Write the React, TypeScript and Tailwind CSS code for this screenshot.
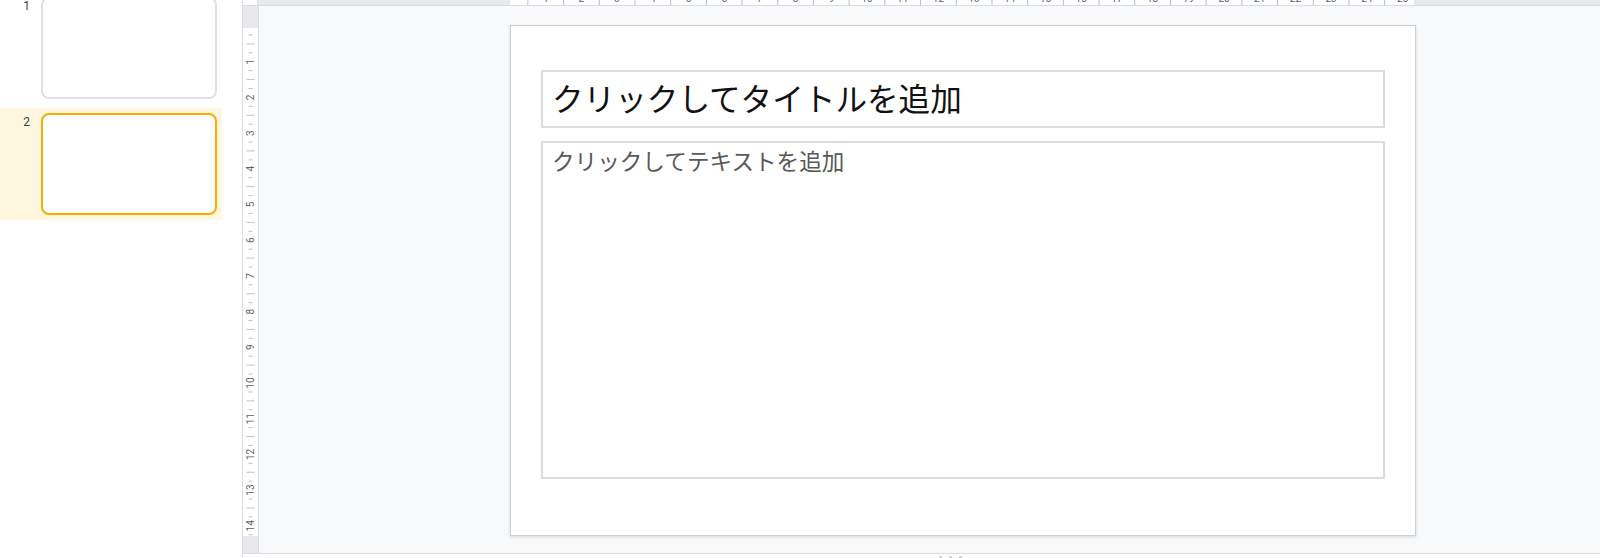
import React from "react";

const CM = 35.7;

function HRuler() {
  const w = 1342;
  const left = 252;
  const right = 1156;
  const ticks: number[] = [];
  for (let k = 0; k < 26; k++) ticks.push(left + CM / 2 + CM * k);
  const labels: number[] = [];
  for (let k = 1; k < 26; k++) labels.push(k);
  return (
    <svg width={w} height={5} className="block">
      <rect x={0} y={0} width={w} height={5} fill="#e8e9ec" />
      <rect x={left} y={0} width={right - left} height={5} fill="#ffffff" />
      {ticks.filter((t) => t < right).map((t, i) => (
        <line key={i} x1={t} x2={t} y1={0} y2={5} stroke="#b9bcc1" strokeWidth={1} />
      ))}
      {labels.map((k) => (
        <text
          key={k}
          x={left + CM * k}
          y={1.6}
          fontSize={10}
          fill="#5f6368"
          textAnchor="middle"
          fontFamily="Roboto, sans-serif"
        >
          {k}
        </text>
      ))}
    </svg>
  );
}

function VRuler() {
  const h = 547;
  const top = 20;
  const bottom = 530;
  const items: React.ReactNode[] = [];
  for (let k = 0; k < 15; k++) {
    const base = top + CM * k;
    const q1 = base + CM / 4;
    const q2 = base + CM / 2;
    const q3 = base + (CM * 3) / 4;
    if (q1 < bottom) items.push(<line key={`a${k}`} x1={5.5} x2={9.5} y1={q1} y2={q1} stroke="#bdc1c6" />);
    if (q2 < bottom) items.push(<line key={`b${k}`} x1={3.5} x2={11.5} y1={q2} y2={q2} stroke="#bdc1c6" />);
    if (q3 < bottom) items.push(<line key={`c${k}`} x1={5.5} x2={9.5} y1={q3} y2={q3} stroke="#bdc1c6" />);
    if (k >= 1 && k <= 14) {
      const y = base;
      items.push(
        <text
          key={`t${k}`}
          x={0}
          y={0}
          fontSize={10}
          fill="#5f6368"
          textAnchor="middle"
          dominantBaseline="central"
          fontFamily="Roboto, sans-serif"
          transform={`translate(7.5 ${y}) rotate(-90)`}
        >
          {k}
        </text>
      );
    }
  }
  return (
    <svg width={15} height={h} className="block">
      <rect x={0} y={0} width={15} height={h} fill="#e8e9ec" />
      <rect x={0} y={22} width={15} height={508} fill="#ffffff" />
      {items}
    </svg>
  );
}

export default function App() {
  return (
    <div
      className="flex h-[558px] w-[1600px] overflow-hidden bg-white"
      style={{ fontFamily: '"Noto Sans CJK JP", "Noto Sans", sans-serif' }}
    >
      {/* Filmstrip */}
      <div className="w-[243px] shrink-0 border-r border-[#dadce0] bg-white">
        <div className="-mt-[8px] flex flex-col gap-[4px]">
          <div className="flex w-[222px] items-start py-[5px]">
            <div className="w-[30px] pt-[1px] text-right text-[12px] leading-[16px] text-[#3c4043] font-['Roboto',sans-serif]">
              1
            </div>
            <div className="ml-[11px] h-[102px] w-[176px] rounded-[8px] border-2 border-[#dfe1e5] bg-white" />
          </div>
          <div className="flex w-[222px] items-start rounded-r-[4px] bg-[#fef7e0] py-[5px]">
            <div className="w-[30px] pt-[1px] text-right text-[12px] leading-[16px] text-[#3c4043] font-['Roboto',sans-serif]">
              2
            </div>
            <div className="ml-[11px] h-[102px] w-[176px] rounded-[8px] border-2 border-[#f9ab00] bg-white" />
          </div>
        </div>
      </div>

      {/* Editor */}
      <div className="flex min-w-0 flex-1 flex-col">
        <div className="flex h-[6px] shrink-0 border-b border-[#dadce0]">
          <div className="w-[15px] shrink-0 border-r border-[#dadce0] bg-white" />
          <div className="flex-1 overflow-hidden">
            <HRuler />
          </div>
        </div>
        <div className="flex h-[547px] shrink-0">
          <div className="w-[16px] shrink-0 overflow-hidden border-r border-[#dadce0]">
            <VRuler />
          </div>
          <div className="flex-1 bg-[#f8f9fa] pl-[251px] pt-[19px]">
            <div className="flex h-[511px] w-[906px] flex-col border border-[#cfd0d2] bg-white px-[30px] pt-[44px] shadow-[0_1px_3px_rgba(60,64,67,0.18)]">
              <div className="flex h-[58px] items-center border-2 border-[#dcdcdc] px-[9px] pb-[4px]">
                <span className="text-[31.6px] leading-[40px] text-[#111111]">クリックしてタイトルを追加</span>
              </div>
              <div className="mt-[13px] h-[338px] border-2 border-[#dcdcdc] px-[9px] pt-[2px]">
                <span className="text-[22.6px] leading-[32px] text-[#595959]">クリックしてテキストを追加</span>
              </div>
            </div>
          </div>
        </div>
        <div className="relative flex-1 border-t border-[#dadce0] bg-white">
          <div className="absolute left-[696px] top-[2px] flex gap-[7px]">
            <div className="h-[3px] w-[3px] rounded-full bg-[#c4c7c5]" />
            <div className="h-[3px] w-[3px] rounded-full bg-[#c4c7c5]" />
            <div className="h-[3px] w-[3px] rounded-full bg-[#c4c7c5]" />
          </div>
        </div>
      </div>
    </div>
  );
}
